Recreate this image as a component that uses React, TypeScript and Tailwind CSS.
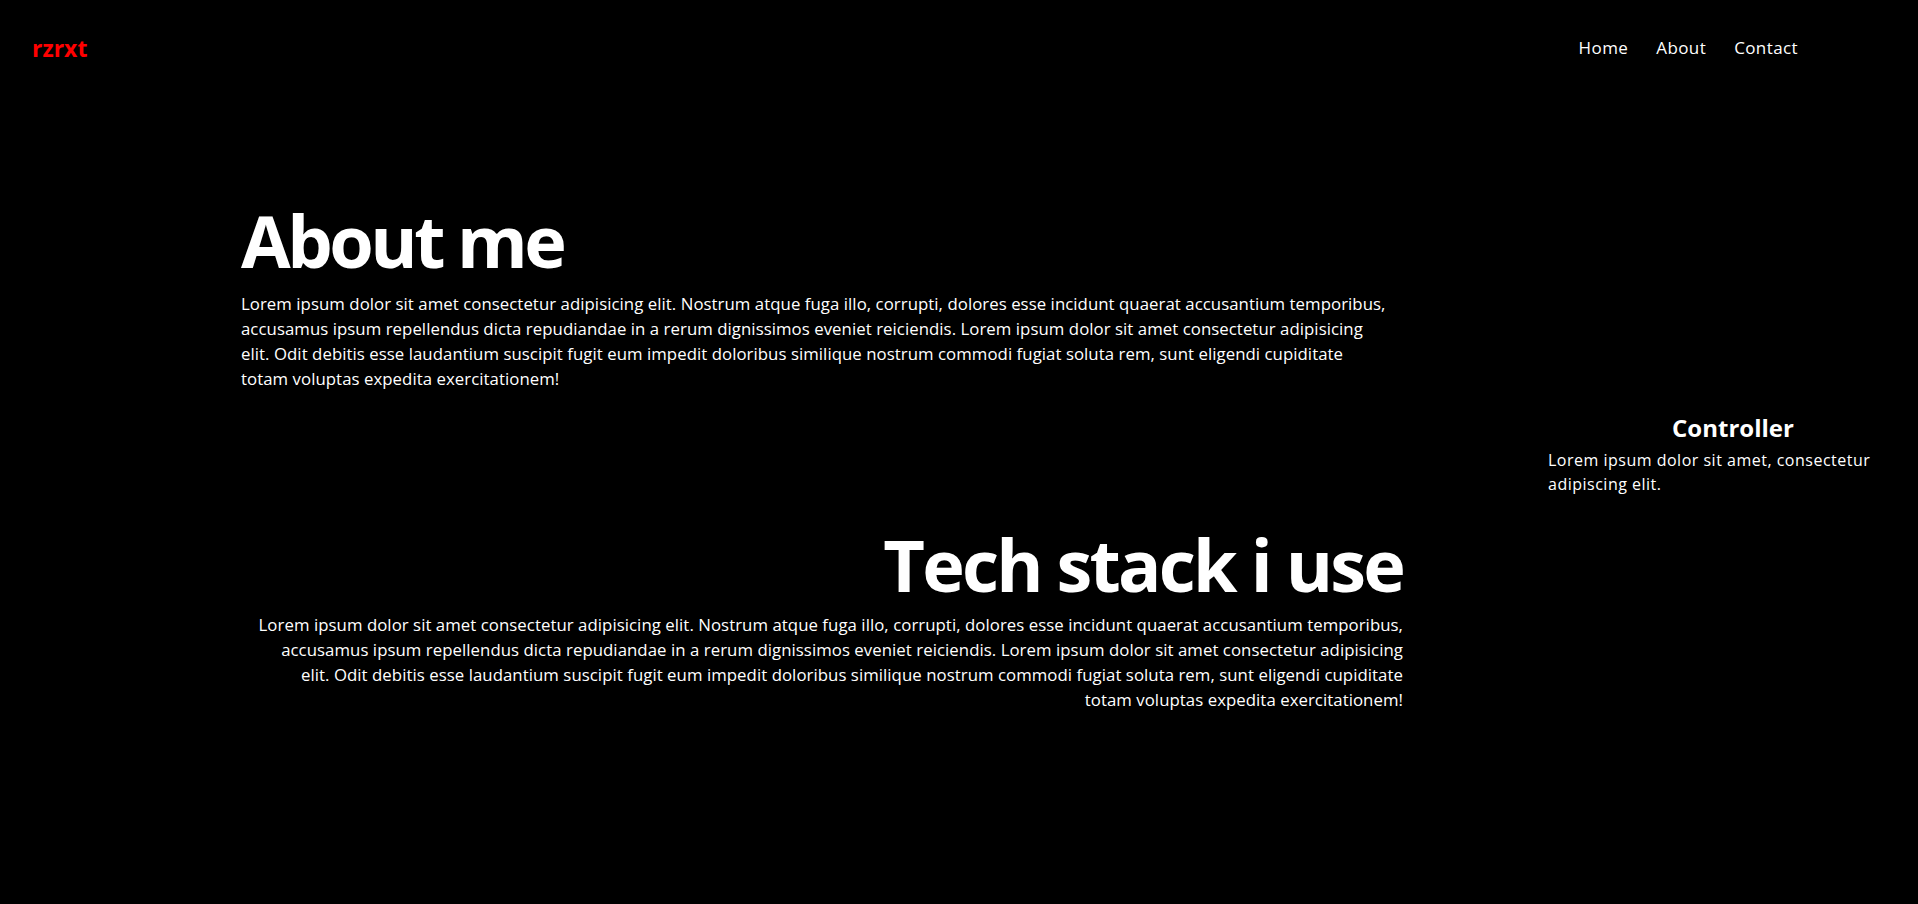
import React from "react";

const lines = [
  "Lorem ipsum dolor sit amet consectetur adipisicing elit. Nostrum atque fuga illo, corrupti, dolores esse incidunt quaerat accusantium temporibus,",
  "accusamus ipsum repellendus dicta repudiandae in a rerum dignissimos eveniet reiciendis. Lorem ipsum dolor sit amet consectetur adipisicing",
  "elit. Odit debitis esse laudantium suscipit fugit eum impedit doloribus similique nostrum commodi fugiat soluta rem, sunt eligendi cupiditate",
  "totam voluptas expedita exercitationem!",
];

function Lorem() {
  return (
    <>
      {lines.map((l, i) => (
        <React.Fragment key={i}>
          {l}
          {i < lines.length - 1 && <br />}
        </React.Fragment>
      ))}
    </>
  );
}

export default function App() {
  return (
    <div
      className="min-h-screen bg-black text-white grid grid-cols-[1fr_370px] grid-rows-[96px_1fr]"
      style={{ fontFamily: "'Open Sans', 'Liberation Sans', sans-serif" }}
    >
      <header className="col-span-2 col-start-1 row-start-1 flex items-center justify-between pl-[32px] pr-[120px]">
        <div className="text-[23px] font-bold text-[#ff0000] leading-none">rzrxt</div>
        <nav className="flex gap-[28px] text-[17px] tracking-[0.4px] text-white">
          <a href="#">Home</a>
          <a href="#">About</a>
          <a href="#">Contact</a>
        </nav>
      </header>

      <main className="col-start-1 row-start-2 pl-[241px]">
        <div className="w-[1162px] pt-[108px]">
          <section>
            <h1 className="text-[72px] font-bold leading-none tracking-[-3.5px]">About me</h1>
            <p className="mt-[15px] text-[16.8px] leading-[25px] tracking-[0.05px] whitespace-nowrap">
              <Lorem />
            </p>
          </section>
          <section className="mt-[137px] text-right">
            <h1 className="text-[72px] font-bold leading-none tracking-[-2.8px]">Tech stack i use</h1>
            <p className="mt-[12px] text-[16.8px] leading-[25px] tracking-[0.05px] whitespace-nowrap">
              <Lorem />
            </p>
          </section>
        </div>
      </main>

      <aside className="col-start-2 row-start-1 row-span-2 flex flex-col justify-center pt-[5px]">
        <h2 className="text-center text-[24px] font-bold leading-[30px]">Controller</h2>
        <p className="mt-[5px] text-[16px] leading-[24px] tracking-[0.5px]">
          Lorem ipsum dolor sit amet, consectetur
          <br />
          adipiscing elit.
        </p>
      </aside>
    </div>
  );
}
